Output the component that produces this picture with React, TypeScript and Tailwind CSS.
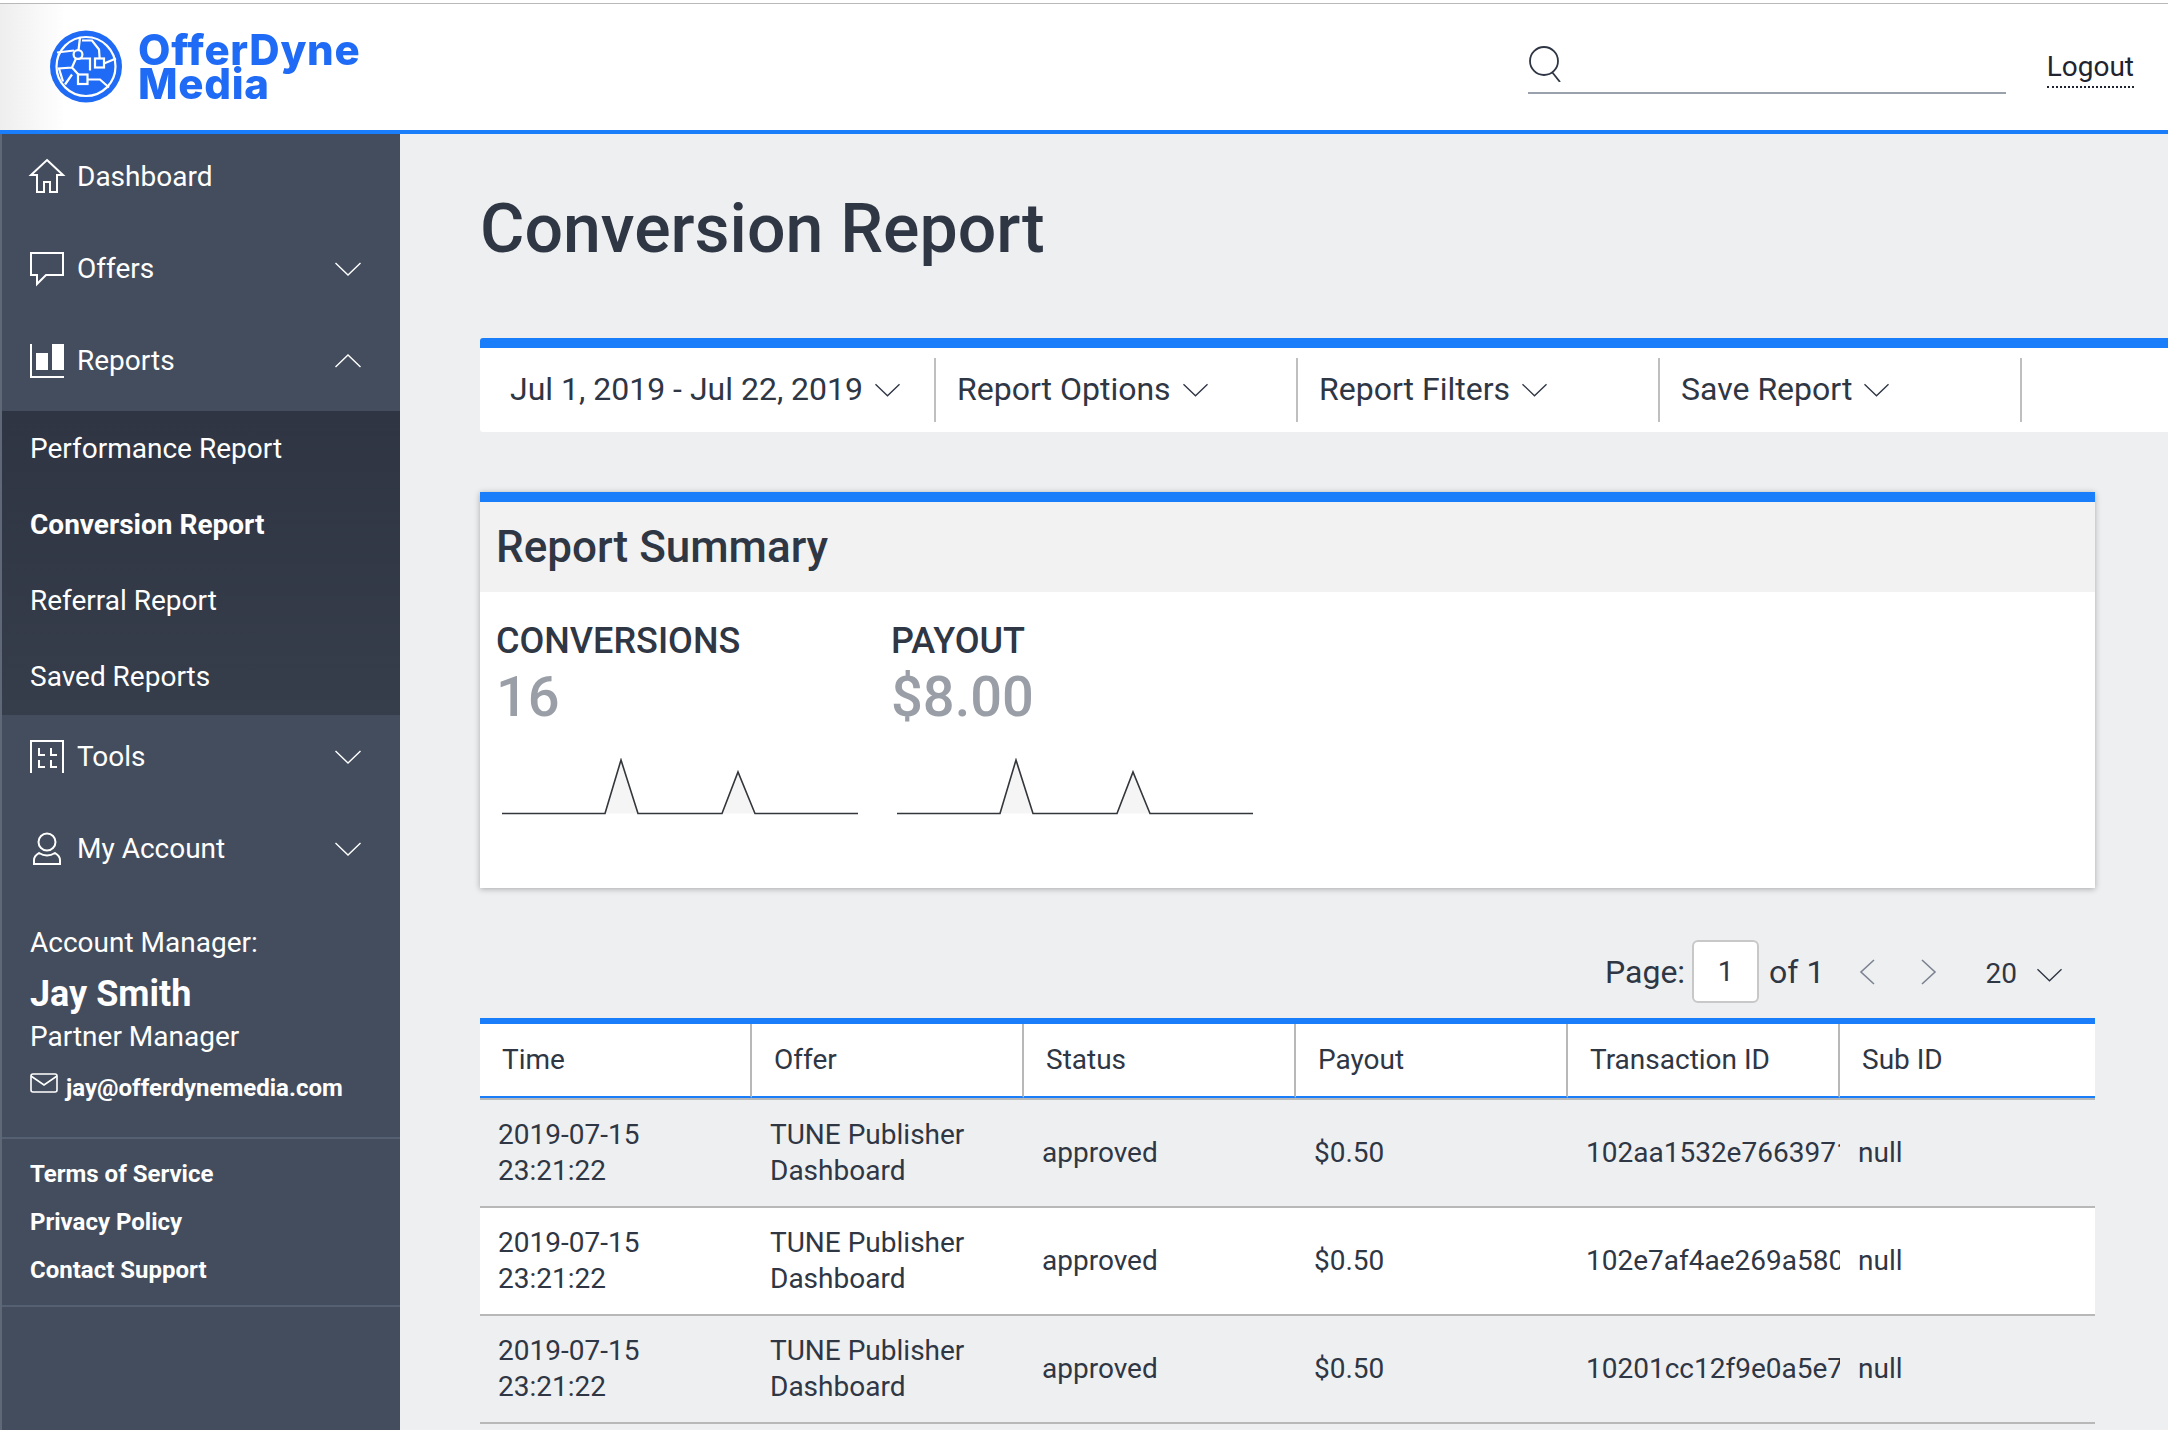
import React from 'react';

const Chevron: React.FC<{ className?: string; up?: boolean }> = ({ className, up }) => (
  <svg viewBox="0 0 26 14" fill="none" stroke="currentColor" strokeWidth="1.4" className={className}>
    <path d={up ? 'M0.5 13 L13 1 L25.5 13' : 'M0.5 1 L13 13 L25.5 1'} />
  </svg>
);

const Logo = () => (
  <svg viewBox="0 0 72 72" className="w-[72px] h-[73px] shrink-0 -mt-[1px] blur-[0.5px]">
    <circle cx="36" cy="36" r="36" fill="#1f6bf5" />
    <circle cx="36" cy="36" r="29.5" fill="none" stroke="#fff" strokeWidth="2.2" />
    <g fill="none" stroke="#fff" strokeWidth="2.2">
      <path d="M30 7 L28 24 M32 10 L42 10 L49 19 L50 33 M7 22 L24 20 M26 28 L22 37 L9 38 L13 51 M22 37 L33 49 M22 44 L15 54 M37 49 L50 49 L59 57 M54 33 L66 28 M28 28 L40 28 L40 40" />
      <circle cx="28" cy="24" r="4.4" fill="#1f6bf5" />
      <rect x="45" y="28" width="9" height="9" fill="#1f6bf5" />
      <rect x="28" y="44" width="9.5" height="9.5" fill="#1f6bf5" />
    </g>
  </svg>
);

const NavRow: React.FC<{ icon: React.ReactNode; label: string; chevron?: 'up' | 'down' }> = ({ icon, label, chevron }) => (
  <div className="h-[84px] mb-2 last:mb-0 flex items-center pl-[28px] pr-[39px]">
    <div className="w-[34px] h-[34px] flex items-center justify-center text-white">{icon}</div>
    <span className="ml-[13px] text-[28px] text-white">{label}</span>
    {chevron && <Chevron up={chevron === 'up'} className="w-[26px] h-[14px] ml-auto text-white" />}
  </div>
);

const Thin: React.FC<{ children: React.ReactNode }> = ({ children }) => (
  <svg viewBox="0 0 34 34" fill="none" stroke="currentColor" strokeWidth="2" className="w-[34px] h-[34px] overflow-visible">{children}</svg>
);

const rows = [
  { id: '102aa1532e7663971f', bg: 'bg-[#eeeff1]' },
  { id: '102e7af4ae269a580d', bg: 'bg-white' },
  { id: '10201cc12f9e0a5e72', bg: 'bg-[#eeeff1]' },
];

const columns = ['Time', 'Offer', 'Status', 'Payout', 'Transaction ID', 'Sub ID'];

const Spark = () => (
  <svg viewBox="0 0 356 60" className="w-[356px] h-[60px]" fill="none">
    <path d="M103 55.5 L119 2 L136 55.5 Z M220 55.5 L236 14 L253 55.5 Z" fill="#f5f5f5" />
    <path d="M0 55.5 H103 L119 2 L136 55.5 H220 L236 14 L253 55.5 H356" stroke="#33363b" strokeWidth="1.6" />
  </svg>
);

const filters = [
  { label: 'Jul 1, 2019 - Jul 22, 2019', width: 'w-[456px]', pad: 'pl-[30px]' },
  { label: 'Report Options', width: 'w-[362px]', pad: 'pl-[21px]' },
  { label: 'Report Filters', width: 'w-[362px]', pad: 'pl-[21px]' },
  { label: 'Save Report', width: 'w-[362px]', pad: 'pl-[21px]' },
];

export default function App() {
  return (
    <div className="w-[2168px] h-[1430px] overflow-hidden bg-[#eeeff1] font-['Roboto',sans-serif] text-[#2f3644] flex flex-col">
      <div className="bg-white pt-[3px] shrink-0">
        <header className="h-[131px] bg-gradient-to-r from-[#eeeeee] via-white via-[3%] to-white border-t border-t-[#b9b9b9] border-b-4 border-b-[#1a7efb] flex items-center pl-[50px] pr-[34px]">
          <Logo />
          <div className="ml-[16px] font-['Inter',sans-serif] font-extrabold text-[#1f6bf5] text-[42px] leading-[34px] tracking-[0.7px] blur-[0.4px]">
            <div>OfferDyne</div>
            <div>Media</div>
          </div>
          <div className="ml-auto self-stretch flex items-start">
            <div className="mt-[42px] w-[478px] h-[48px] border-b-2 border-b-[#9aa1ad] flex items-start">
              <svg viewBox="0 0 36 36" fill="none" stroke="#2e3543" strokeWidth="1.8" className="w-[36px] h-[36px]">
                <circle cx="16" cy="15" r="14" />
                <path d="M24 26 L32 36" />
              </svg>
            </div>
            <div className="mt-[45px] ml-[41px] text-[28px] leading-[36px] pb-[1px] text-[#1f2430] border-b-2 border-dotted border-b-[#1f2430]">Logout</div>
          </div>
        </header>
      </div>

      <div className="flex flex-1 min-h-0">
        <aside className="w-[400px] shrink-0 pt-[1px] bg-[#444d5d] border-l-2 border-l-[#5f6877] flex flex-col">
          <NavRow
            label="Dashboard"
            icon={
              <Thin>
                <path d="M17 0 L33 15 H27 V32 H20 V22 H14 V32 H7 V15 H1 Z" />
              </Thin>
            }
          />
          <NavRow
            label="Offers"
            chevron="down"
            icon={
              <Thin>
                <path d="M1 1 H33 V23 H16 L7 32 V23 H1 Z" />
              </Thin>
            }
          />
          <NavRow
            label="Reports"
            chevron="up"
            icon={
              <Thin>
                <path d="M1 0 V33 H34" />
                <rect x="6" y="9" width="12" height="17" fill="currentColor" stroke="none" />
                <rect x="22" y="0" width="12" height="26" fill="currentColor" stroke="none" />
              </Thin>
            }
          />
          <nav className="bg-gradient-to-b from-[#2f3542] to-[#363d4b] pl-[28px] text-white text-[28px]">
            <div className="h-[76px] flex items-center">Performance Report</div>
            <div className="h-[76px] flex items-center font-bold">Conversion Report</div>
            <div className="h-[76px] flex items-center">Referral Report</div>
            <div className="h-[76px] flex items-center">Saved Reports</div>
          </nav>
          <NavRow
            label="Tools"
            chevron="down"
            icon={
              <Thin>
                <path d="M1 33 V1 H33 V33 M9 8 V15 H15 M21 8 V15 H27 M9 20 V27 H15 M21 20 V27 H27" />
              </Thin>
            }
          />
          <NavRow
            label="My Account"
            chevron="down"
            icon={
              <Thin>
                <circle cx="17" cy="10" r="8.5" />
                <path d="M4 32 V28 Q4 24 9 21 Q17 26 25 21 Q30 24 30 28 V32 Z" />
              </Thin>
            }
          />
          <div className="pl-[28px] mt-[24px] text-white">
            <div className="text-[28px] leading-[40px]">Account Manager:</div>
            <div className="text-[36px] leading-[44px] font-bold mt-[9px]">Jay Smith</div>
            <div className="text-[28px] leading-[40px] mt-[1px]">Partner Manager</div>
            <div className="flex items-center mt-[9px] h-[44px]">
              <svg viewBox="0 0 28 20" fill="none" stroke="currentColor" strokeWidth="1.6" className="w-[28px] h-[20px] -mt-[10px]">
                <rect x="1" y="1" width="26" height="18" rx="2" />
                <path d="M1 3 L14 12 L27 3" />
              </svg>
              <span className="ml-[8px] text-[24px] font-bold">jay@offerdynemedia.com</span>
            </div>
          </div>
          <div className="mt-[27px] border-t-2 border-b-2 border-[#566073] pl-[28px] text-white text-[24px] font-bold pt-[11px] pb-[11px]">
            <div className="h-[48px] flex items-center">Terms of Service</div>
            <div className="h-[48px] flex items-center">Privacy Policy</div>
            <div className="h-[48px] flex items-center">Contact Support</div>
          </div>
        </aside>

        <main className="flex-1 min-w-0 pl-[80px]">
          <h1 className="text-[68px] leading-[80px] font-medium mt-[55px]">Conversion Report</h1>

          <div className="mt-[69px] h-[94px] pb-[2px] bg-white border-t-[10px] border-t-[#1a7efb] rounded-tl-[3px] rounded-bl-[3px] flex items-center">
            {filters.map(f => (
              <div key={f.label} className={`${f.width} ${f.pad} h-[64px] mt-[2px] border-r-2 border-r-[#bfbfbf] flex items-center text-[32px]`}>
                <span className="-mt-[2px]">{f.label}</span>
                <Chevron className="ml-[12px] w-[25px] h-[14px]" />
              </div>
            ))}
          </div>

          <section className="mt-[60px] w-[1615px] h-[396px] bg-white border-t-[10px] border-t-[#1a7efb] shadow-[0_1px_6px_rgba(0,0,0,0.3)]">
            <div className="h-[90px] bg-[#f2f2f3] pl-[16px] flex items-center text-[44px] font-medium">Report Summary</div>
            <div className="flex pl-[16px] pt-[27px]">
              <div className="w-[395px]">
                <div className="text-[36px] leading-[44px] font-medium">CONVERSIONS</div>
                <div className="text-[56px] leading-[64px] font-medium text-[#9a9ea7] mt-[2px]">16</div>
                <div className="mt-[29px] pl-[6px]"><Spark /></div>
              </div>
              <div>
                <div className="text-[36px] leading-[44px] font-medium">PAYOUT</div>
                <div className="text-[56px] leading-[64px] font-medium text-[#9a9ea7] mt-[2px]">$8.00</div>
                <div className="mt-[29px] pl-[6px]"><Spark /></div>
              </div>
            </div>
          </section>

          <div className="mt-[52px] w-[1615px] h-[63px] flex items-center text-[32px]">
            <span className="ml-[1125px]">Page:</span>
            <div className="ml-[7px] w-[67px] h-[63px] bg-white border-2 border-[#c8c8c8] rounded-[6px] flex items-center justify-center text-[28px]">1</div>
            <span className="ml-[10px]">of 1</span>
            <svg viewBox="0 0 16 26" fill="none" stroke="#7c8390" strokeWidth="1.6" className="ml-[35px] w-[16px] h-[26px]"><path d="M15 1 L2 13 L15 25" /></svg>
            <svg viewBox="0 0 16 26" fill="none" stroke="#7c8390" strokeWidth="1.6" className="ml-[46px] w-[16px] h-[26px]"><path d="M1 1 L14 13 L1 25" /></svg>
            <span className="ml-[48px] text-[28px] mt-[4px]">20</span>
            <Chevron className="ml-[20px] w-[25px] h-[14px] mt-[7px]" />
          </div>

          <div className="mt-[15px] w-[1615px] border-t-[6px] border-t-[#1a7efb]">
            <div className="relative grid grid-cols-[272px_272px_272px_272px_272px_1fr] h-[74px] mb-[2px] bg-white shadow-[0_2px_0_#b8b8b8]">
              {columns.map(c => (
                <div key={c} className="pl-[22px] flex items-center text-[28px] border-r-2 border-r-[#b8b8b8] last:border-r-0 border-b-2 border-b-[#1a7efb]">{c}</div>
              ))}
            </div>
            {rows.map(r => (
              <div key={r.id} className={`grid grid-cols-[272px_272px_272px_272px_272px_1fr] h-[108px] ${r.bg} border-b-2 border-b-[#b8b8b8] text-[28px] leading-[36px]`}>
                <div className="pl-[18px] flex flex-col justify-center"><div>2019-07-15</div><div>23:21:22</div></div>
                <div className="pl-[18px] flex flex-col justify-center"><div>TUNE Publisher</div><div>Dashboard</div></div>
                <div className="pl-[18px] flex items-center">approved</div>
                <div className="pl-[18px] flex items-center">$0.50</div>
                <div className="pl-[18px] flex items-center overflow-hidden whitespace-nowrap">{r.id}</div>
                <div className="pl-[18px] flex items-center">null</div>
              </div>
            ))}
          </div>
        </main>
      </div>
    </div>
  );
}
